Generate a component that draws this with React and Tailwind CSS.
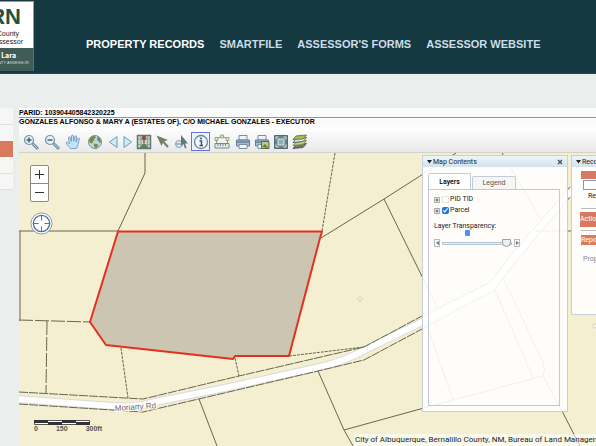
import React, { useState } from "react";

const navLinks = ["SMARTFILE", "ASSESSOR'S FORMS", "ASSESSOR WEBSITE"];

const boundaries = [
  "M145 153V173L118 231",
  "M19 231H118",
  "M20 231V321",
  "M321 238L384 199L456 153",
  "M384 199L437 307",
  "M502 153L540 218",
  "M535 231H571",
  "M199 399L217 446",
  "M318 371L344 430L353 446",
  "M344 430L453 400L543 376",
  "M428 328L453 400",
  "M495 290L533 378",
  "M503 278L543 362Q546 370 543 376L562 411L580 446",
];

const dashedBoundaries = [
  "M335 153L322 231",
  "M121 348L128 398",
  "M235 358L239 376",
  "M289 356L364 347",
];

const MapCanvas = () => (
  <svg
    className="absolute inset-0 w-full h-full"
    viewBox="19 153 577 293"
    preserveAspectRatio="xMinYMin slice"
    fill="none"
    aria-hidden="true"
  >
    {/* Moriarty Rd */}
    <path
      d="M17 399L112 406Q134 408 155 402L220 389L320 367Q345 361 365 350L422 322L492 286Q500 281 508 264L570 192L600 162"
      stroke="#d9d8dc"
      strokeWidth="8"
    />
    <path
      d="M17 399L112 406Q134 408 155 402L220 389L320 367Q345 361 365 350L422 322L492 286Q500 281 508 264L570 192L600 162"
      stroke="#ffffff"
      strokeWidth="6"
    />
    <g stroke="#69664f" strokeWidth="1">
      {boundaries.map((d) => (
        <path key={d} d={d} />
      ))}
      <path
        d="M19 404L143 412L220 394L318 371L364 360L422 329L495 290L503 278L570 197"
        strokeDasharray="9 1"
      />
      <path
        d="M19 392L143 399L239 376L364 347L422 316L490 282L515 250L570 187"
        strokeDasharray="9 1"
      />
      <path d="M19 320L90 322" strokeDasharray="14 2" />
      <path d="M47 321L46 393" strokeDasharray="14 2" />
      {dashedBoundaries.map((d) => (
        <path key={d} d={d} strokeDasharray="3 1" />
      ))}
    </g>
    {/* selected parcel */}
    <path
      d="M118 231.500H322L320 238L289 356H235L233 359L106 345L90 322Z"
      fill="#cbc5b1"
      stroke="#e4301f"
      strokeWidth="2"
      strokeLinejoin="round"
    />
    <circle cx="360" cy="299" r="2" fill="#f8f6e6" stroke="#d5d0b8" strokeWidth="1" />
    <circle cx="595" cy="326" r="2" fill="#f8f6e6" stroke="#d5d0b8" strokeWidth="1" />
    <text
      x="115"
      y="411"
      fontSize="8"
      fill="#6b6965"
      stroke="#ffffff"
      strokeWidth="2"
      paintOrder="stroke"
      transform="rotate(-4 115 411)"
    >
      Moriarty Rd
    </text>
  </svg>
);

const Magnifier = ({ plus }) => (
  <svg width="16" height="16" viewBox="0 0 16 16" fill="none">
    <path d="M9.500 9.500L14 14" stroke="#6f8ea3" strokeWidth="3" strokeLinecap="round" />
    <path d="M10 10L14 14" stroke="#b9d5e6" strokeWidth="1" strokeLinecap="round" />
    <circle cx="6" cy="6" r="4.500" fill="#e3f1f9" stroke="#7892a5" strokeWidth="1.200" />
    <path d="M3.500 6H8.500" stroke="#3f5f78" strokeWidth="1.500" />
    {plus && <path d="M6 3.500V8.500" stroke="#3f5f78" strokeWidth="1.500" />}
  </svg>
);

const Hand = () => (
  <svg width="16" height="16" viewBox="0 0 16 16">
    <path
      d="M5.500 14.500L2 10.500C.5 8.500 1.500 7.500 3 8.500L4.500 10L3.500 4C3.300 2.500 5 2.200 5.300 3.700L6.300 7.500L6.500 2C6.600.8 8.300.8 8.400 2L8.700 7.300L9.800 2.500C10.200 1.300 11.700 1.700 11.500 3L11 8L12.700 4.500C13.300 3.400 14.800 4 14.400 5.300L12.800 11L11.500 14.500Z"
      fill="#c4e3f7"
      stroke="#6d9cc4"
      strokeWidth=".9"
      strokeLinejoin="round"
    />
  </svg>
);

const Globe = () => (
  <svg width="16" height="16" viewBox="0 0 16 16">
    <circle cx="8" cy="8" r="6.500" fill="#b9d7e8" stroke="#7d8f93" />
    <path d="M1.800 7C2.200 3.800 4.800 1.800 8 2L9 3.500L7 5L7.500 6.500L5.500 7.500L6 9L4 9.500Z" fill="#768f45" />
    <path d="M10.500 2.500C12.800 3.500 14.200 5.500 14 8L12.500 9L11.500 7L10 6Z" fill="#768f45" />
    <path d="M6.500 9.500L10 10L11.500 11.500L9.500 14L7.500 13.500Z" fill="#768f45" />
  </svg>
);

const Triangle = ({ left }) => (
  <svg width="11" height="14" viewBox="0 0 11 14">
    <path
      d={left ? "M9 1.500V12.500L1.500 7Z" : "M2 1.500V12.500L9.500 7Z"}
      fill="#d4e8f6"
      stroke="#6b9cc0"
      strokeLinejoin="round"
    />
  </svg>
);

const Overview = () => (
  <svg width="16" height="16" viewBox="0 0 16 16">
    <path d="M1.500 1.500H14.500V14.500H1.500Z" fill="#cbd6c4" stroke="#5f7775" strokeWidth="1.500" />
    <path d="M2 5H14M2 10.500H14M5 2V14M11.500 2V14" stroke="#87a09a" />
    <path d="M3 14L8 9L13 14Z" fill="#66804f" />
    <path d="M8 9V5" stroke="#333" />
    <circle cx="8" cy="4" r="2.300" fill="#a8404c" />
  </svg>
);

const SelectArrow = () => (
  <svg width="15" height="15" viewBox="0 0 15 15">
    <path d="M1.500 1.500L13 6L8.500 7.500L6.500 12Z" fill="#718064" />
    <path d="M8 7.500L13 13" stroke="#718064" strokeWidth="2" />
  </svg>
);

const Pick = () => (
  <svg width="15" height="16" viewBox="0 0 15 16">
    <circle cx="5" cy="10" r="3.500" fill="#dce8ee" stroke="#86a1b0" />
    <path d="M7 1V12L9.500 10L11 14.500L12.500 14L11 9.500H14Z" fill="#5d7680" />
    <path d="M2 10H8" stroke="#6d8994" />
  </svg>
);

const Info = () => (
  <svg width="16" height="16" viewBox="0 0 16 16">
    <circle cx="8" cy="8" r="6.500" fill="#eef5fa" stroke="#6b8798" strokeWidth="1.300" />
    <circle cx="8" cy="4.500" r="1" fill="#2e5672" />
    <path d="M6.500 7H8.500V11.500M6.500 11.500H10" stroke="#2e5672" strokeWidth="1.400" fill="none" />
  </svg>
);

const Measure = () => (
  <svg width="16" height="16" viewBox="0 0 16 16" fill="none">
    <path d="M2.500 9V4.500L8 2.500L13.500 4.500V9" stroke="#8a9a86" />
    <path d="M6.500 1H9.500V4H6.500ZM1 3.500H4V6.500H1ZM12 3.500H15V6.500H12Z" fill="#dce4c8" stroke="#8b9b70" strokeWidth=".8" />
    <path d="M1 9.500H15V14H1Z" fill="#e7ebdf" stroke="#72899a" />
    <path d="M4 10V12M6.500 10V12M9 10V12M11.500 10V12" stroke="#72899a" />
  </svg>
);

const PrinterIcon = ({ copy }) => (
  <svg width="16" height="16" viewBox="0 0 16 16">
    <path d="M4 1.500H12V6H4Z" fill="#eef3f7" stroke="#7890a5" />
    <path d="M1.500 6H14.500V12H1.500Z" fill="#a9bccb" stroke="#637f97" />
    <path d="M2 8H14" stroke="#4f6678" />
    <path d="M4 10.500H12V14.500H4Z" fill="#f5f7f8" stroke="#7890a5" />
    {copy && (
      <>
        <path d="M7.500 7.500H15V14.500H7.500Z" fill="#b9c98d" stroke="#596e43" />
        <path d="M8 13L11 10L14.500 14Z" fill="#657d41" />
      </>
    )}
  </svg>
);

const Extent = () => (
  <svg width="16" height="16" viewBox="0 0 16 16" fill="none">
    <path d="M1.500 1.500H14.500V14.500H1.500Z" fill="#698387" stroke="#4f6c72" />
    <path d="M5 5H11V11H5Z" fill="#8fb0b8" stroke="#d6e5e7" />
    <path d="M3 5.500V3H5.500M10.500 3H13V5.500M13 10.500V13H10.500M5.500 13H3V10.500" stroke="#d6e5e7" />
  </svg>
);

const LayerStack = () => (
  <svg width="16" height="16" viewBox="0 0 16 16" strokeLinejoin="round">
    <path d="M4 11L14.500 9.500L11 13.500L1 14.500Z" fill="#66777b" stroke="#516064" />
    <path d="M4 8L14.500 6.500L11 10.500L1 11.500Z" fill="#c1cf75" stroke="#7d8c3d" />
    <path d="M4 5L14.500 3.500L11 7.500L1 8.500Z" fill="#dce9ee" stroke="#516c78" />
    <path d="M4 2L14.500 1L11 5L1 5.500Z" fill="#a9b85a" stroke="#728039" />
  </svg>
);

const tools = [
  { name: "Zoom in", icon: <Magnifier plus />, width: "w-[21px]" },
  { name: "Zoom out", icon: <Magnifier />, width: "w-[21px]" },
  { name: "Pan", icon: <Hand />, width: "w-[21px]" },
  { name: "Full extent", icon: <Globe />, width: "w-[23px]" },
  { name: "Previous extent", icon: <Triangle left />, width: "w-[14px]" },
  { name: "Next extent", icon: <Triangle />, width: "w-[14px]" },
  { name: "Overview map", icon: <Overview />, width: "w-[19px]" },
  { name: "Select", icon: <SelectArrow />, width: "w-[19px]" },
  { name: "Pick parcel", icon: <Pick />, width: "w-[19px]" },
  { name: "Identify", icon: <Info />, width: "w-[19px]" },
  { name: "Measure", icon: <Measure />, width: "w-[23px]" },
  { name: "Print", icon: <PrinterIcon />, width: "w-[19px]" },
  { name: "Print map", icon: <PrinterIcon copy />, width: "w-[19px]" },
  { name: "Extent", icon: <Extent />, width: "w-[19px]" },
  { name: "Layers", icon: <LayerStack />, width: "w-[19px]" },
];

const Header = () => (
  <header className="h-[74px] shrink-0 flex bg-[#143941] border-b border-[#174a52]">
    <a
      href="#home"
      className="w-[34px] h-[70px] mt-px flex flex-col overflow-hidden whitespace-nowrap"
    >
      <div className="h-[47px] flex flex-col items-end bg-white border-t border-r border-[#d9836b] text-[#222]">
        <span className="pr-3 pt-[2px] text-[22px] leading-[26px] font-bold text-[#21523f]">BERN</span>
        <span className="pr-[14px] text-[7px] leading-[8px] font-medium">County</span>
        <span className="pr-[10px] text-[7px] leading-[8px] font-medium">Assessor</span>
      </div>
      <div className="flex-1 flex flex-col items-end bg-[#405c56] border-r border-[#6b6d64] text-white">
        <span className="pr-[17px] pt-[3px] text-[7px] leading-[9px] font-bold font-[Inter,sans-serif]">Lara</span>
        <span className="pr-1 text-[4px] leading-[6px] text-[#d5dedb]">COUNTY ASSESSOR</span>
      </div>
    </a>
    <nav className="ml-[52px] mt-[37px] flex gap-[15px] text-[11px] leading-[14px] font-bold whitespace-nowrap text-[#cbdde8]">
      <a href="#records" className="text-white">
        PROPERTY RECORDS
      </a>
      {navLinks.map((link) => (
        <a key={link} href="#nav">
          {link}
        </a>
      ))}
    </nav>
  </header>
);

const Sidebar = () => (
  <nav aria-label="Records" className="w-[13px] shrink-0 flex flex-col">
    <a href="#summary" aria-label="Summary" className="h-[17px] bg-[#f6f6f5] border-b border-[#dfe3e1]" />
    <a href="#values" aria-label="Values" className="h-4 bg-[#f6f6f5]" />
    <a href="#map" aria-label="Map" className="h-4 bg-[#d87a60]" />
    <a href="#sales" aria-label="Sales" className="h-[17px] bg-[#f6f6f5] border-b border-[#dfe3e1]" />
    <a href="#photos" aria-label="Photos" className="h-4 bg-[#f6f6f5] border-b border-[#dfe3e1]" />
  </nav>
);

const Toolbar = ({ tool, setTool }) => (
  <div className="h-[26px] shrink-0 pt-[4px] pl-px flex items-center bg-linear-to-b from-white to-[#e9e9ea] border-b border-[#d3d3cc]">
    {tools.map(({ name, icon, width }) => (
      <button
        key={name}
        type="button"
        aria-label={name}
        onClick={() => setTool(name)}
        className={`${width} h-[19px] shrink-0 flex items-center justify-center border ${
          tool === name ? "border-[#6a74d0] bg-[#edf2fc]" : "border-transparent"
        }`}
      >
        {icon}
      </button>
    ))}
  </div>
);

const PanelTitle = ({ children, closable }) => (
  <div className="h-[11px] px-1 flex items-center gap-px bg-linear-to-b from-[#edf5fa] to-[#d2e2ee] text-[7px] leading-[10px] text-[#222] whitespace-nowrap">
    <svg width="5" height="4" viewBox="0 0 5 4">
      <path d="M0 0H5L2.500 3.500Z" fill="#222" />
    </svg>
    <h2 className="flex-1">{children}</h2>
    {closable && (
      <button type="button" aria-label="Close" className="flex">
        <svg width="6" height="6" viewBox="0 0 6 6">
          <path d="M1 1L5 5M5 1L1 5" stroke="#555" strokeWidth="1.500" />
        </svg>
      </button>
    )}
  </div>
);

const Expander = ({ label }) => (
  <button type="button" aria-label={label} className="mr-[2px] flex">
    <svg width="6" height="6" viewBox="0 0 6 6">
      <path d="M.5.5H5.500V5.500H.5Z" fill="#eee" stroke="#999" strokeWidth=".8" />
      <path d="M1.500 3H4.500M3 1.500V4.500" stroke="#444" strokeWidth=".8" />
    </svg>
  </button>
);

const SliderArrow = ({ left }) => (
  <button
    type="button"
    aria-label={left ? "Decrease" : "Increase"}
    className="w-[6px] h-2 shrink-0 flex items-center justify-center border border-[#b5bcc2] bg-[#f3f5f6]"
  >
    <svg width="3" height="4" viewBox="0 0 3 4">
      <path d={left ? "M3 0V4L0 2Z" : "M0 0V4L3 2Z"} fill="#777" />
    </svg>
  </button>
);

const MapContents = () => {
  const [tab, setTab] = useState("Layers");
  const [pid, setPid] = useState(false);
  const [parcel, setParcel] = useState(true);
  const [opacity, setOpacity] = useState(100);

  return (
    <section className="absolute top-[2px] right-[28px] w-[146px] h-[257px] flex flex-col border border-[#c8cfdb] bg-white/90 text-[7px] text-[#222] font-[Roboto,sans-serif]">
      <PanelTitle closable>Map Contents</PanelTitle>
      <div className="flex-1 flex flex-col pl-[5px] pr-[7px] pt-[6px] pb-[5px]">
        <div role="tablist" className="flex items-end gap-px">
          <button
            type="button"
            role="tab"
            onClick={() => setTab("Layers")}
            className={`w-[43px] h-[17px] -mb-px border border-b-0 border-[#c3cbdb] bg-white rounded-t-[2px] ${
              tab === "Layers" ? "font-medium text-black" : "text-[#666]"
            }`}
          >
            Layers
          </button>
          <button
            type="button"
            role="tab"
            onClick={() => setTab("Legend")}
            className="w-[44px] h-[13px] border border-b-0 border-[#c3cbdb] bg-[#f4f4f2]/80 rounded-t-[2px] text-[#555]"
          >
            Legend
          </button>
        </div>
        <div className="flex-1 px-[5px] pt-[4px] border border-[#c3c7da]">
          <div className="h-[11px] flex items-center">
            <Expander label="Expand PID TID" />
            <label className="flex items-center gap-px">
              <input
                type="checkbox"
                checked={pid}
                onChange={(e) => setPid(e.target.checked)}
                className="appearance-none w-[7px] h-[7px] border border-[#e4e4e4] bg-white"
              />
              PID TID
            </label>
          </div>
          <div className="h-[11px] flex items-center">
            <Expander label="Expand Parcel" />
            <label className="flex items-center gap-px">
              <input
                type="checkbox"
                checked={parcel}
                onChange={(e) => setParcel(e.target.checked)}
                className="w-[7px] h-[7px] accent-[#1976e8]"
              />
              Parcel
            </label>
          </div>
          <label htmlFor="transparency" className="block mt-[6px] h-[8px] leading-[8px] whitespace-nowrap">
            Layer Transparency:
          </label>
          <div className="w-[36px] h-[6px] flex justify-end">
            <select aria-label="Transparency layer" className="appearance-none w-[5px] h-[6px] rounded-[1px] bg-[#4a93f5] text-transparent">
              <option aria-label="All layers" />
            </select>
          </div>
          <div className="mt-[3px] w-[86px] flex items-center gap-[2px]">
            <SliderArrow left />
            <input
              id="transparency"
              type="range"
              value={opacity}
              onChange={(e) => setOpacity(e.target.value)}
              className="appearance-none min-w-0 flex-1 h-[3px] border border-[#b5c7d8] bg-[#e3edf6] [&::-webkit-slider-thumb]:appearance-none [&::-webkit-slider-thumb]:w-[9px] [&::-webkit-slider-thumb]:h-2 [&::-webkit-slider-thumb]:rounded-b-full [&::-webkit-slider-thumb]:border [&::-webkit-slider-thumb]:border-[#9b9fa3] [&::-webkit-slider-thumb]:bg-[#eeeeee]"
            />
            <SliderArrow />
          </div>
        </div>
      </div>
    </section>
  );
};

const RecordPanel = () => (
  <section className="absolute top-[2px] -right-[121px] w-[146px] h-[160px] border border-[#c8cfdb] bg-white/90 text-[7px] text-[#222] font-[Roboto,sans-serif]">
    <PanelTitle>Records</PanelTitle>
    <div className="pl-[9px] pt-1 flex flex-col whitespace-nowrap">
      <div className="h-2 bg-[#d87a60]" />
      <input
        id="record"
        type="text"
        className="ml-[2px] mt-px w-[60px] h-[10px] border border-[#8796b8] bg-white"
      />
      <label htmlFor="record" className="ml-[7px] mt-px leading-[10px]">
        Record
      </label>
      <hr className="mt-[7px] border-[#bbbbbb]" />
      <button type="button" className="-ml-px mt-[3px] h-[15px] text-left bg-[#d87a60] text-white">
        Actions
      </button>
      <hr className="mt-[3px] border-[#bbbbbb]" />
      <button type="button" className="mt-[4px] h-[10px] leading-[10px] text-left bg-[#d87a60] text-white">
        Reports
      </button>
      <a href="#property" className="ml-[2px] mt-[9px] leading-[10px] text-[#888]">
        Property
      </a>
    </div>
  </section>
);

const MapControls = () => (
  <div className="absolute top-3 left-[11px] flex flex-col items-start gap-[10px]">
    <div className="w-[19px] flex flex-col border border-[#8b8a84] rounded-[2px] bg-white text-[#333]">
      <button type="button" aria-label="Zoom in" className="h-[18px] flex items-center justify-center border-b border-[#8b8a84]">
        <svg width="9" height="9" viewBox="0 0 9 9">
          <path d="M0 4.500H9M4.500 0V9" stroke="currentColor" />
        </svg>
      </button>
      <button type="button" aria-label="Zoom out" className="h-[17px] flex items-center justify-center">
        <svg width="9" height="9" viewBox="0 0 9 9">
          <path d="M0 4.500H9" stroke="currentColor" />
        </svg>
      </button>
    </div>
    <button type="button" aria-label="My location">
      <svg width="23" height="23" viewBox="0 0 24 24" fill="none">
        <circle cx="12" cy="12" r="11" fill="#ffffff" stroke="#97958c" />
        <circle cx="12" cy="12" r="8.500" stroke="#3772c0" strokeWidth="1.300" />
        <path d="M12 3V9M12 15V21M3 12H9M15 12H21" stroke="#3772c0" />
      </svg>
    </button>
  </div>
);

const ScaleBar = () => (
  <div className="absolute left-[15px] bottom-[14px] w-[68px] text-[7px] leading-[7px] font-bold text-[#555]">
    <svg width="56" height="5" viewBox="0 0 56 5" className="block">
      <path d="M.5.5H55.500V4.500H.5Z" fill="#fff" stroke="#555" />
      <path d="M0 0H14V3H0ZM28 0H42V3H28ZM14 2H28V5H14ZM42 2H56V5H42Z" fill="#333" />
    </svg>
    <div className="flex justify-between">
      <span>0</span>
      <span>150</span>
      <span>300ft</span>
    </div>
  </div>
);

const App = () => {
  const [tool, setTool] = useState("Identify");

  return (
    <div className="h-screen flex flex-col overflow-hidden bg-[#eaeeed] text-black font-['Liberation_Sans',Arial,sans-serif]">
      <Header />
      <div className="flex-1 min-h-0 pt-[34px] flex gap-[6px]">
        <Sidebar />
        <main className="flex-1 min-w-0 flex flex-col">
          <div className="bg-[#fbfbfb] text-[7px] font-bold whitespace-nowrap">
            <p className="h-[10px] leading-[9px] border-b border-[#8d93b5]">PARID: 103904405842320225</p>
            <p className="h-[9px] leading-[8px]">
              GONZALES ALFONSO &amp; MARY A (ESTATES OF), C/O MICHAEL GONZALES - EXECUTOR
            </p>
          </div>
          <Toolbar tool={tool} setTool={setTool} />
          <div className="relative flex-1 overflow-hidden bg-[#f3efd0]">
            <MapCanvas />
            <MapControls />
            <ScaleBar />
            <p className="absolute left-[335px] right-0 bottom-0 h-[12px] pl-px overflow-hidden bg-white/60 text-[8px] leading-[11px] whitespace-nowrap text-[#222] font-[Roboto,sans-serif]">
              City of Albuquerque, Bernalillo County, NM, Bureau of Land Management
            </p>
            <MapContents />
            <RecordPanel />
          </div>
        </main>
      </div>
    </div>
  );
};

export default App;
